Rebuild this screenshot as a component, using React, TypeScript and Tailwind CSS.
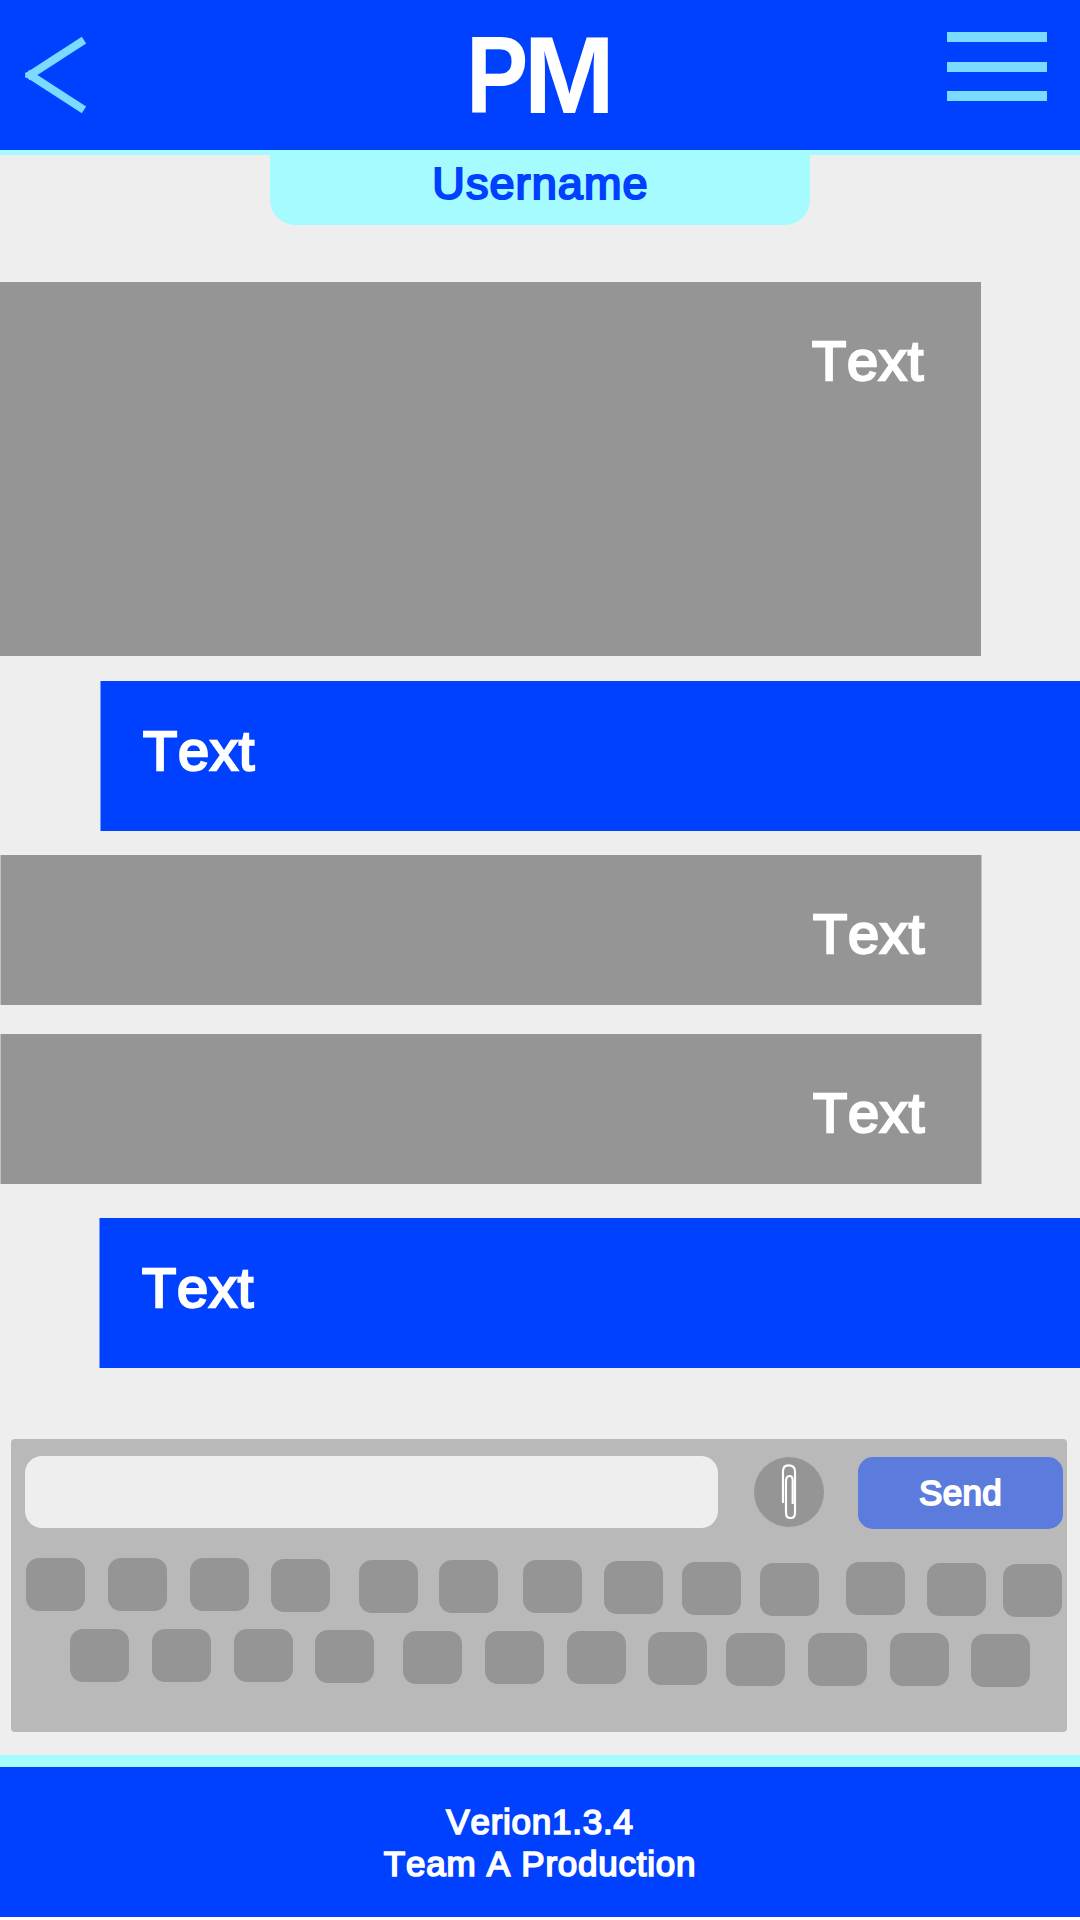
const topKeys = [
  "ml-[15px]",
  "ml-[23px]",
  "ml-[23px]",
  "ml-[22px] mt-px",
  "ml-[29px] mt-[2px]",
  "ml-[21px] mt-[2px]",
  "ml-[25px] mt-[2px]",
  "ml-[22px] mt-[3px]",
  "ml-[19px] mt-[4px]",
  "ml-[19px] mt-[5px]",
  "ml-[27px] mt-[4px]",
  "ml-[22px] mt-[5px]",
  "ml-[17px] mt-[6px]",
];

const bottomKeys = [
  "ml-[59px]",
  "ml-[23px]",
  "ml-[23px]",
  "ml-[22px] mt-px",
  "ml-[29px] mt-[2px]",
  "ml-[23px] mt-[2px]",
  "ml-[23px] mt-[2px]",
  "ml-[22px] mt-[3px]",
  "ml-[19px] mt-[4px]",
  "ml-[23px] mt-[4px]",
  "ml-[23px] mt-[4px]",
  "ml-[22px] mt-[5px]",
];

function KeyRow({ keys, className }: { keys: string[]; className: string }) {
  return (
    <div className={`flex items-start ${className}`}>
      {keys.map((offset, i) => (
        <div key={i} className={`h-[53px] w-[59px] shrink-0 rounded-[13px] bg-[#959595] ${offset}`} />
      ))}
    </div>
  );
}

function Message({ className }: { className: string }) {
  return (
    <div className={className}>
      <p className="text-[56px] leading-[64px] tracking-[0.8px] text-white [-webkit-text-stroke:2.4px_white]">Text</p>
    </div>
  );
}

export default function App() {
  return (
    <div className="h-[1920px] w-[1080px] overflow-hidden bg-white font-['Liberation_Sans',Arial,sans-serif] [font-kerning:none]">
      <div className="flex h-[1917px] flex-col bg-[#eeeeee]">
        <header className="flex h-[155px] shrink-0 items-start justify-between border-b-[5px] border-[#a6fbff] bg-[#0040ff]">
          <button className="ml-[25px] mt-[36px]" aria-label="Back">
            <svg width="62" height="78" viewBox="0 0 62 78" fill="none" stroke="#7adbff" strokeWidth="8">
              <path d="M59 4.2 L2.200 40.800" />
              <path d="M59 73.8 L2.200 37.200" />
              <path d="M0.300 36.600 H6 V41.700 H0.300 Z" fill="#7adbff" stroke="none" />
            </svg>
          </button>
          <h1 className="ml-[47px] mt-[13px] flex w-[150px] text-[110px] font-bold leading-[124px] text-white">
            <span className="w-[58px] origin-left scale-x-[0.85]">P</span>
            <span>M</span>
          </h1>
          <button className="mr-[33px] mt-[32px] flex w-[100px] flex-col" aria-label="Menu">
            <span className="h-[10px] w-full bg-[#7adbff]" />
            <span className="mt-[20px] h-[10px] w-full bg-[#7adbff]" />
            <span className="mt-[19px] h-[10px] w-full bg-[#7adbff]" />
          </button>
        </header>

        <div className="mx-auto h-[70px] w-[540px] shrink-0 rounded-b-[25px] bg-[#a6fbff] pl-px text-center text-[45px] leading-[57px] tracking-[1.1px] text-[#0040ff] [-webkit-text-stroke:2.1px_#0040ff]">
          Username
        </div>

        <main className="mt-[57px] flex flex-col">
          <Message className="flex h-[374px] w-[981px] justify-end bg-[#959595] pr-[57px] pt-[47px]" />
          <Message className="mt-[25px] h-[150px] w-[980px] self-end border-l border-[#7797f6] bg-[#0040ff] pl-[42px] pt-[38px]" />
          <Message className="mt-[24px] flex h-[150px] w-[982px] justify-end border-x border-[#c2c2c2] bg-[#959595] pr-[56px] pt-[47px]" />
          <Message className="mt-[29px] flex h-[150px] w-[982px] justify-end border-x border-[#c2c2c2] bg-[#959595] pr-[56px] pt-[47px]" />
          <Message className="mt-[34px] h-[150px] w-[981px] self-end border-l border-[#7797f6] bg-[#0040ff] pl-[42px] pt-[38px]" />
        </main>

        <section className="ml-[11px] mt-[71px] h-[293px] w-[1056px] shrink-0 rounded-[4px] bg-[#b9b9b9]">
          <div className="flex items-start pt-[17px]">
            <input
              aria-label="Message"
              className="ml-[14px] h-[72px] w-[693px] rounded-[17px] bg-[#eeeeee] px-5 text-4xl outline-none"
            />
            <button className="ml-[36px] mt-px size-[70px] rounded-full bg-[#959595]" aria-label="Attach">
              <svg width="70" height="70" viewBox="0 0 210 210" fill="none" stroke="white" strokeWidth="6.5">
                <path d="M87 138 V43 Q87 25 103 25 Q123 25 123 43 V167 Q123 183 109.500 183 Q96 183 96 167 V74 Q96 57 106 57 Q116 57 116 70 V141" />
              </svg>
            </button>
            <button className="ml-[34px] mt-px h-[72px] w-[205px] rounded-[15px] bg-[#5b7cdd] pb-px text-[35px] leading-[71px] tracking-[0.3px] text-white [-webkit-text-stroke:1.8px_white]">
              Send
            </button>
          </div>
          <KeyRow keys={topKeys} className="mt-[29px] h-[71px]" />
          <KeyRow keys={bottomKeys} className="" />
        </section>

        <footer className="mt-auto h-[162px] shrink-0 border-t-[12px] border-[#a6fbff] bg-[#0040ff] pt-[34px] text-center text-[35px] leading-[42px] tracking-[0.75px] text-white [-webkit-text-stroke:1.7px_white]">
          <p>Verion1.3.4</p>
          <p>Team A Production</p>
        </footer>
      </div>
    </div>
  );
}
